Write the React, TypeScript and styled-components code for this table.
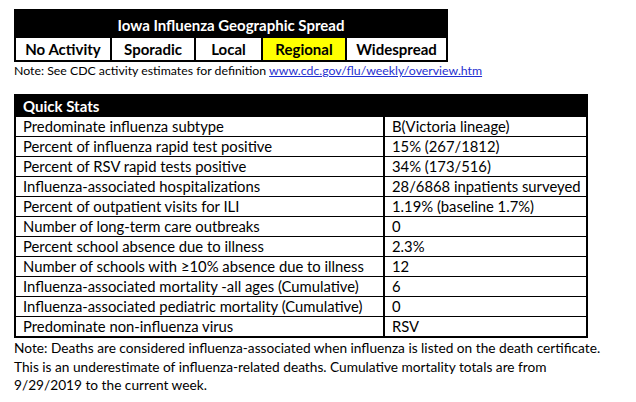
import React from "react";
import styled, { createGlobalStyle } from "styled-components";

const Global = createGlobalStyle`
  html, body { margin: 0; padding: 0; background: #ffffff; }
  body { font-family: Lato, "Open Sans", sans-serif; color: #000; }
`;

const Page = styled.div`
  width: 636px;
  height: 402px;
  box-sizing: border-box;
  padding: 9px 0 0 14px;
  display: flex;
  flex-direction: column;
`;

const SpreadBox = styled.div`
  width: 434px;
  box-sizing: border-box;
  border: 2px solid #000;
  background: #000;
  display: grid;
  grid-template-columns: 94px 82px 65px 82px 99px;
  grid-template-rows: 27px 22px;
  column-gap: 2px;
`;

const SpreadTitle = styled.div`
  grid-column: 1 / -1;
  color: #fff;
  font-weight: 700;
  font-size: 15px;
  display: flex;
  align-items: center;
  justify-content: center;
  padding-top: 1px;
`;

const Level = styled.div<{ $active?: boolean }>`
  background: ${(p) => (p.$active ? "#ffff00" : "#ffffff")};
  font-weight: 700;
  font-size: 15px;
  display: flex;
  align-items: center;
  justify-content: center;
`;

const SmallNote = styled.div`
  font-size: 12.3px;
  line-height: 14px;
  margin-top: 2px;
  white-space: nowrap;
`;

const Link = styled.a`
  color: #1f2fd0;
  text-decoration: underline;
`;

const StatsTable = styled.div`
  margin-top: 16px;
  width: 574px;
  box-sizing: border-box;
  border: 2px solid #000;
  display: grid;
  grid-template-columns: 367px 2px 1fr;
`;

const StatsHeader = styled.div`
  grid-column: 1 / -1;
  background: #000;
  color: #fff;
  font-weight: 700;
  font-size: 15px;
  height: 21px;
  line-height: 21px;
  padding-left: 7px;
`;

const Cell = styled.div<{ $last?: boolean }>`
  height: 19px;
  line-height: 19px;
  font-size: 14.8px;
  padding-left: 7px;
  white-space: nowrap;
  border-bottom: ${(p) => (p.$last ? "none" : "1px solid #000")};
`;

const Divider = styled.div`
  background: #000;
`;

const FootNote = styled.div`
  font-size: 13.7px;
  line-height: 18.5px;
  margin-top: 1px;
`;

const FootLine = styled.div`
  white-space: nowrap;
`;

const levels = ["No Activity", "Sporadic", "Local", "Regional", "Widespread"];
const activeLevel = "Regional";

const stats: [string, string][] = [
  ["Predominate influenza subtype", "B(Victoria lineage)"],
  ["Percent of influenza rapid test positive", "15% (267/1812)"],
  ["Percent of RSV rapid tests positive", "34% (173/516)"],
  ["Influenza-associated hospitalizations", "28/6868 inpatients surveyed"],
  ["Percent of outpatient visits for ILI", "1.19% (baseline 1.7%)"],
  ["Number of long-term care outbreaks", "0"],
  ["Percent school absence due to illness", "2.3%"],
  ["Number of schools with \u226510% absence due to illness", "12"],
  ["Influenza-associated mortality -all ages (Cumulative)", "6"],
  ["Influenza-associated pediatric mortality (Cumulative)", "0"],
  ["Predominate non-influenza virus", "RSV"],
];

const footLines = [
  "Note: Deaths are considered influenza-associated when influenza is listed on the death certificate.",
  "This is an underestimate of influenza-related deaths. Cumulative mortality totals are from",
  "9/29/2019 to the current week.",
];

export default function App() {
  return (
    <>
      <Global />
      <Page>
        <SpreadBox>
          <SpreadTitle>Iowa Influenza Geographic Spread</SpreadTitle>
          {levels.map((l) => (
            <Level key={l} $active={l === activeLevel}>
              {l}
            </Level>
          ))}
        </SpreadBox>
        <SmallNote>
          Note: See CDC activity estimates for definition{" "}
          <Link href="#">www.cdc.gov/flu/weekly/overview.htm</Link>
        </SmallNote>
        <StatsTable>
          <StatsHeader>Quick Stats</StatsHeader>
          {stats.map(([k, v], i) => {
            const last = i === stats.length - 1;
            return (
              <React.Fragment key={k}>
                <Cell $last={last}>{k}</Cell>
                <Divider />
                <Cell $last={last}>{v}</Cell>
              </React.Fragment>
            );
          })}
        </StatsTable>
        <FootNote>
          {footLines.map((l) => (
            <FootLine key={l}>{l}</FootLine>
          ))}
        </FootNote>
      </Page>
    </>
  );
}
